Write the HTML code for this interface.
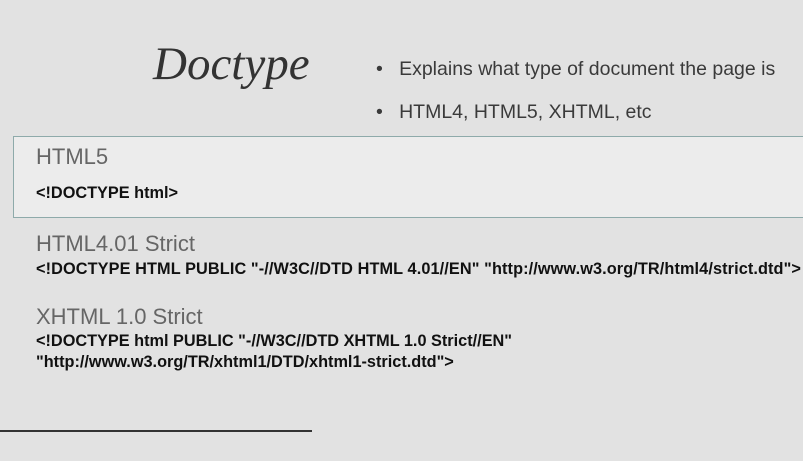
<!DOCTYPE html>
<html><head><style>
body{margin:0;width:803px;height:461px;background:#e2e2e2;position:relative;overflow:hidden;font-family:"Liberation Sans",sans-serif;color:#111}
.a{position:absolute;white-space:nowrap}
.t{font-family:"Liberation Serif",serif;font-style:italic;font-size:47px;color:#333;left:153px;top:37px}
.b{font-size:19.5px;color:#3a3a3a}
.h{font-size:22px;color:#666}
.c{font-size:16.3px;font-weight:bold;color:#111}
.box{position:absolute;left:13px;top:136px;width:800px;height:82px;background:#ececec;border:1px solid #8eaaaa;box-sizing:border-box}
</style></head><body>
<div class="a t">Doctype</div>
<div class="a b" style="left:376px;top:58px">•&nbsp;&nbsp;&nbsp;Explains what type of document the page is</div>
<div class="a b" style="left:376px;top:101px">•&nbsp;&nbsp;&nbsp;HTML4, HTML5, XHTML, etc</div>
<div class="box"></div>
<div class="a h" style="left:36px;top:144px">HTML5</div>
<div class="a c" style="left:36px;top:184px">&lt;!DOCTYPE html&gt;</div>
<div class="a h" style="left:36px;top:231px">HTML4.01 Strict</div>
<div class="a c" style="left:36px;top:260px;letter-spacing:0.1px">&lt;!DOCTYPE HTML PUBLIC "-//W3C//DTD HTML 4.01//EN" "http://www.w3.org/TR/html4/strict.dtd"&gt;</div>
<div class="a h" style="left:36px;top:304px">XHTML 1.0 Strict</div>
<div class="a c" style="left:36px;top:332px">&lt;!DOCTYPE html PUBLIC "-//W3C//DTD XHTML 1.0 Strict//EN"</div>
<div class="a c" style="left:36px;top:353px">"http://www.w3.org/TR/xhtml1/DTD/xhtml1-strict.dtd"&gt;</div>
<div class="a" style="left:0;top:430px;width:312px;height:2px;background:#333"></div>
</body></html>
